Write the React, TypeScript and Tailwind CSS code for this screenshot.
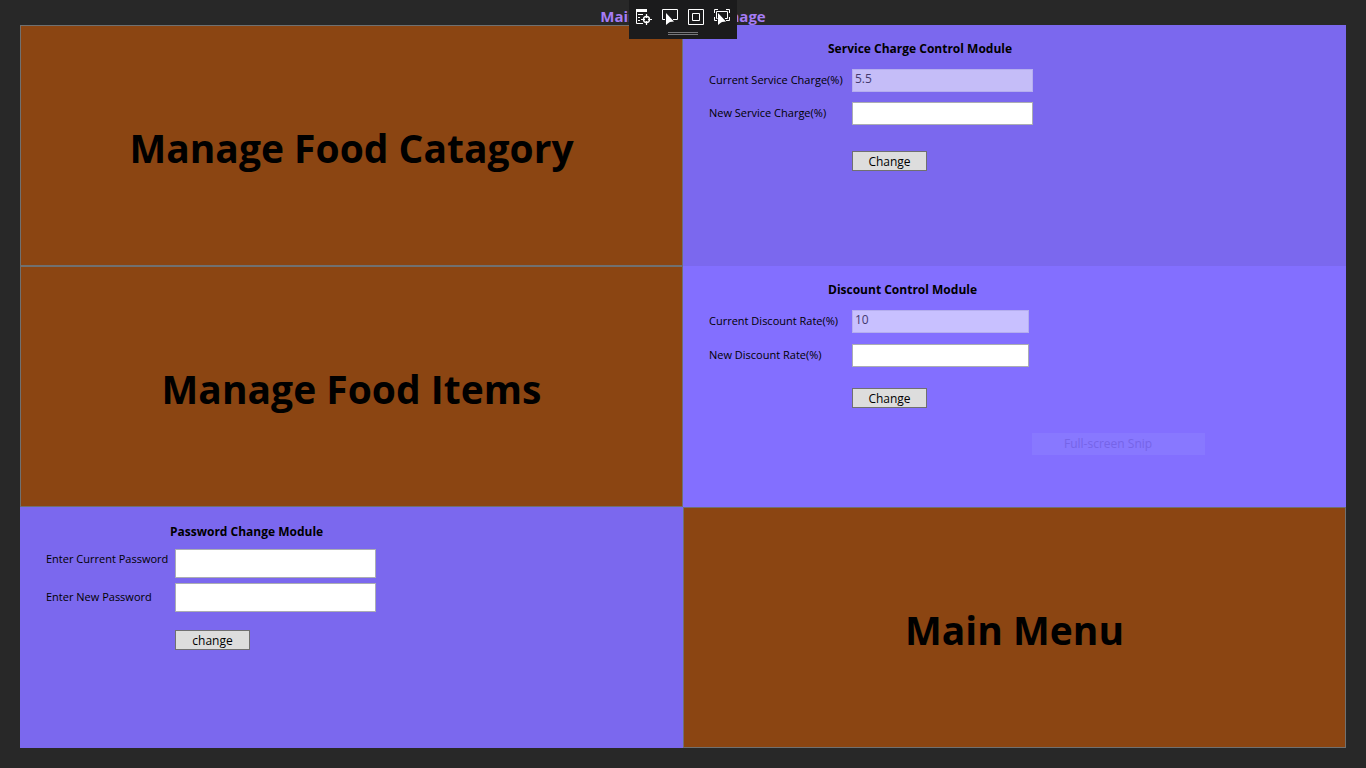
import type { ReactNode } from "react";

function Tile({ children }: { children: ReactNode }) {
  return (
    <button
      type="button"
      className="flex items-center justify-center border border-[#707070] bg-[#8b4512] pt-1 text-[39px] leading-[52px] font-bold text-black"
    >
      {children}
    </button>
  );
}

function ActionButton({ children }: { children: ReactNode }) {
  return (
    <button
      type="submit"
      className="h-5 w-[75px] border border-[#707070] bg-[#dddddd] pt-px text-center text-xs leading-[18px] text-black"
    >
      {children}
    </button>
  );
}

type RateProps = {
  id: string;
  title: string;
  currentLabel: string;
  newLabel: string;
  value: string;
  panelClass: string;
  inputClass: string;
  rowsClass: string;
  actionClass: string;
};

function RateModule(p: RateProps) {
  return (
    <form className={`pt-4 pl-[26px] ${p.panelClass}`} onSubmit={(e) => e.preventDefault()}>
      <h2 className="pl-[119px] text-xs leading-4 font-bold">{p.title}</h2>
      <div className={`mt-3 grid grid-cols-[143px_1fr] items-center ${p.rowsClass}`}>
        <label htmlFor={`${p.id}-current`} className="pb-0.5 text-[11px] leading-4 whitespace-nowrap">
          {p.currentLabel}
        </label>
        <input
          id={`${p.id}-current`}
          disabled
          defaultValue={p.value}
          className={`h-[23px] border border-[#b5aeee] bg-white/56 px-0.5 pb-1 text-xs text-[#44396f] ${p.inputClass}`}
        />
        <label htmlFor={`${p.id}-new`} className="pb-0.5 text-[11px] leading-4 whitespace-nowrap">
          {p.newLabel}
        </label>
        <input
          id={`${p.id}-new`}
          className={`h-[23px] border border-[#abadb3] bg-white px-0.5 text-xs ${p.inputClass}`}
        />
      </div>
      <div className={`pl-[143px] ${p.actionClass}`}>
        <ActionButton>Change</ActionButton>
      </div>
    </form>
  );
}

function PasswordModule() {
  const field = "h-[29px] w-[201px] border border-[#abadb3] bg-white px-0.5 text-xs";
  return (
    <form className="bg-[#7b68ee] pt-[17px] pl-[26px]" onSubmit={(e) => e.preventDefault()}>
      <h2 className="pl-[124px] text-xs leading-4 font-bold">Password Change Module</h2>
      <div className="mt-[9px] grid grid-cols-[129px_1fr] items-center gap-y-[5px]">
        <label htmlFor="password-current" className="pb-2.5 text-[11px] leading-4 whitespace-nowrap">
          Enter Current Password
        </label>
        <input id="password-current" type="password" className={field} />
        <label htmlFor="password-new" className="pb-0.5 text-[11px] leading-4 whitespace-nowrap">
          Enter New Password
        </label>
        <input id="password-new" type="password" className={field} />
      </div>
      <div className="mt-[18px] pl-[129px]">
        <ActionButton>change</ActionButton>
      </div>
    </form>
  );
}

function Pointer() {
  return (
    <path
      d="M4 4v12l2.800-2.200L8 13l4-.6z"
      fill="#fff"
      stroke="#1b1b1c"
      paintOrder="stroke"
    />
  );
}

function DebugToolbar() {
  const tool = "flex h-5 w-[26px] items-center justify-center";
  return (
    <div className="absolute top-0 left-1/2 flex h-[39px] w-[108px] -translate-x-1/2 flex-col items-center bg-[#1b1b1c] pt-[7px]">
      <div className="-ml-px flex">
        <button type="button" aria-label="Go to Live Visual Tree" className={tool}>
          <svg width="16" height="16" viewBox="0 0 16 16" fill="none" stroke="#fff">
            <path d="M0 0h11v3H0z" fill="#fff" stroke="none" />
            <path d="M.5 3v11.500H7M2 5.500h5M2 8.500h2M2 11.500h2" />
            <circle cx="10.500" cy="10.500" r="3" strokeWidth="1.400" />
            <path d="M10.500 5v4M10.500 12v4M5 10.500h4M12 10.500h4" strokeWidth="1.200" />
          </svg>
        </button>
        <button type="button" aria-label="Enable selection" className={tool}>
          <svg width="16" height="16" viewBox="0 0 16 16" fill="none" stroke="#fff">
            <path d="M3 10.500H.5V.5h15v10H11" />
            <Pointer />
          </svg>
        </button>
        <button type="button" aria-label="Display layout adorners" className={tool}>
          <svg width="16" height="16" viewBox="0 0 16 16" fill="none" stroke="#fff">
            <path d="M.5.5h15v15H.5zM4.500 4.500h7v7h-7z" />
          </svg>
        </button>
        <button type="button" aria-label="Track focused element" className={tool}>
          <svg width="16" height="16" viewBox="0 0 16 16" fill="none" stroke="#fff">
            <path d="M.5 4V.5H4M12 .5h3.500V4M.5 8v3.500H3M15.500 8v3.500H12" />
            <path d="M4 9.500H2.500v-7h11v7H11" />
            <Pointer />
          </svg>
        </button>
      </div>
      <div className="mt-[5px] h-[3px] w-[30px] border-y border-[#77777a]" />
    </div>
  );
}

export default function App() {
  return (
    <div className="relative flex min-h-screen flex-col bg-[#282828] px-5 pb-5 font-['Open_Sans','Segoe_UI',sans-serif] text-xs text-black">
      <h1 className="h-[25px] pt-1 text-center text-[15px] leading-6 font-bold text-[#a57cf5]">
        Main Window Manage
      </h1>
      <main className="grid flex-1 grid-cols-2 grid-rows-3">
        <Tile>Manage Food Catagory</Tile>
        <RateModule
          id="service"
          title="Service Charge Control Module"
          currentLabel="Current Service Charge(%)"
          newLabel="New Service Charge(%)"
          value="5.5"
          panelClass="bg-[#7b68ee]"
          inputClass="w-[181px]"
          rowsClass="gap-y-[10px]"
          actionClass="mt-[26px]"
        />
        <Tile>Manage Food Items</Tile>
        <div className="relative grid">
          <RateModule
            id="discount"
            title="Discount Control Module"
            currentLabel="Current Discount Rate(%)"
            newLabel="New Discount Rate(%)"
            value="10"
            panelClass="bg-[#836fff]"
            inputClass="w-[177px]"
            rowsClass="gap-y-[11px]"
            actionClass="mt-[21px]"
          />
          <div className="absolute top-[167px] left-[349px] h-[22px] w-[173px] bg-[#8878ff] pl-8 leading-[22px] text-[#7664e8]">
            Full-screen Snip
          </div>
        </div>
        <PasswordModule />
        <Tile>Main Menu</Tile>
      </main>
      <DebugToolbar />
    </div>
  );
}
